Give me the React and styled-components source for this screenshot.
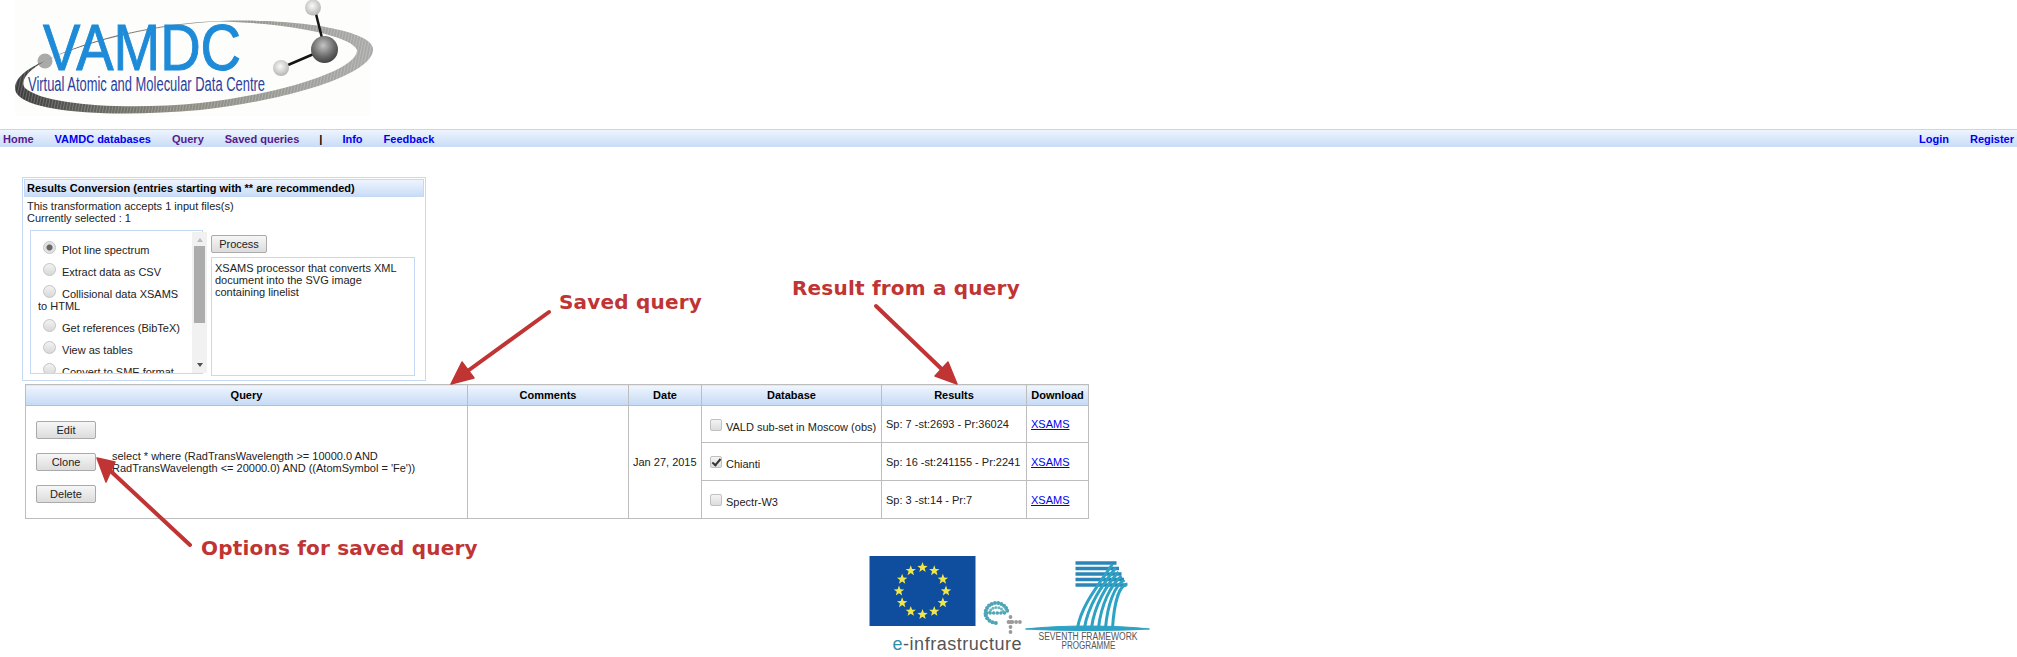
import React from 'react';
import styled, { createGlobalStyle } from 'styled-components';

const GlobalStyle = createGlobalStyle`
  html, body {
    margin: 0;
    padding: 0;
    background: #fff;
    font-family: "Liberation Sans", Arial, sans-serif;
    font-size: 11px;
    color: #222;
  }
`;

const Page = styled.div`
  position: relative;
  width: 2017px;
  height: 657px;
  overflow: hidden;
`;

const LogoBar = styled.header`
  height: 129px;
`;

const NavBar = styled.nav`
  display: flex;
  align-items: center;
  justify-content: space-between;
  height: 17px;
  padding: 0 3px;
  border-top: 1px solid #c3d7f2;
  background: linear-gradient(#eef4fe, #c9dcf7);
`;

const NavGroup = styled.div`
  display: flex;
  gap: 21px;
`;

const NavLink = styled.a`
  font-weight: bold;
  font-size: 11px;
  text-decoration: none;
  color: ${props => (props.$visited ? '#551a8b' : '#0000ee')};
`;

const NavSep = styled.span`
  font-weight: bold;
  color: #000;
  margin: 0 -1px 0 -1px;
`;

const Panel = styled.section`
  width: 400px;
  height: 200px;
  margin: 30px 0 0 22px;
  padding: 1px;
  border: 1px solid #c5d9f5;
`;

const PanelTitle = styled.div`
  height: 16px;
  line-height: 16px;
  padding-left: 2px;
  border: 1px solid #c5d9f5;
  background: linear-gradient(#eef4fe, #c9dcf7);
  font-weight: bold;
  color: #000;
`;

const PanelText = styled.p`
  margin: 3px 0 0 3px;
  line-height: 12px;
`;

const PanelBody = styled.div`
  display: flex;
  margin: 6px 0 0 6px;
`;

const OptionList = styled.div`
  width: 173px;
  height: 144px;
  padding: 10px 14px 0 7px;
  box-sizing: border-box;
  border: 1px solid #c5d9f5;
  overflow: hidden;
`;

const Option = styled.label`
  display: block;
  line-height: 12px;
  margin-bottom: 7px;
`;

const Radio = styled.input.attrs({ type: 'radio' })`
  appearance: none;
  display: inline-block;
  width: 13px;
  height: 13px;
  margin: 0 6px 0 5px;
  border: 1px solid #c4c4c4;
  border-radius: 50%;
  box-sizing: border-box;
  vertical-align: 0;
  background: ${props =>
    props.checked
      ? 'radial-gradient(circle, #666 0 2.5px, #ddd 3.5px, #eee 100%)'
      : 'linear-gradient(#f2f2f2, #d8d8d8)'};
`;

const Scrollbar = styled.div`
  display: flex;
  flex-direction: column;
  align-items: center;
  justify-content: space-between;
  position: relative;
  width: 15px;
  height: 141px;
  margin: 2px 0 0 -11px;
  padding: 6px 0;
  box-sizing: border-box;
  background: #f1f1f1;
`;

const ScrollThumb = styled.div`
  position: absolute;
  top: 14px;
  left: 2px;
  width: 11px;
  height: 77px;
  background: #acacac;
`;

const ScrollArrow = styled.span`
  width: 0;
  height: 0;
  border-left: 3.5px solid transparent;
  border-right: 3.5px solid transparent;
  ${props =>
    props.$up ? 'border-bottom: 4px solid #bbb;' : 'border-top: 4px solid #505050;'}
`;

const ProcessColumn = styled.div`
  display: flex;
  flex-direction: column;
  align-items: flex-start;
  margin: 5px 0 0 4px;
`;

const Description = styled.div`
  width: 195px;
  height: 109px;
  margin-top: 4px;
  padding: 4px 4px 4px 3px;
  border: 1px solid #c5d9f5;
  line-height: 12px;
`;

const Button = styled.button`
  display: block;
  width: ${props => props.$width || '60px'};
  height: 18px;
  padding: 0;
  border: 1px solid #aaa;
  border-radius: 2px;
  background: linear-gradient(#f6f6f6, #dcdcdc);
  font: 11px "Liberation Sans", Arial, sans-serif;
  color: #222;
`;

const QueryTable = styled.table`
  table-layout: fixed;
  width: 1063px;
  margin: 3px 0 0 25px;
  border-collapse: collapse;
`;

const HeadCell = styled.th`
  height: 20px;
  padding: 0;
  border: 1px solid #bdbdbd;
  background: linear-gradient(#f0f6fe, #c5d9f5);
  font-size: 11px;
  font-weight: bold;
  color: #000;
`;

const Cell = styled.td`
  padding: 0 0 0 ${props => props.$pad || '4px'};
  border: 1px solid #bdbdbd;
  font-size: 11px;
  line-height: 12px;
`;

const QueryRow = styled.div`
  display: flex;
  align-items: center;
  gap: 16px;
  padding-left: 10px;
`;

const ButtonStack = styled.div`
  display: flex;
  flex-direction: column;
  gap: 14px;
`;

const QueryText = styled.div`
  width: 320px;
`;

const DbLabel = styled.label`
  display: block;
  padding-top: 3px;
`;

const Check = styled.input.attrs({ type: 'checkbox' })`
  appearance: none;
  position: relative;
  display: inline-block;
  width: 12px;
  height: 12px;
  margin: 0 4px 0 0;
  border: 1px solid #c0c0c0;
  border-radius: 2px;
  box-sizing: border-box;
  vertical-align: 0;
  background: linear-gradient(#f4f4f4, #dcdcdc);

  &:checked::after {
    content: '';
    position: absolute;
    left: 3px;
    top: 0;
    width: 3px;
    height: 7px;
    border: solid #333;
    border-width: 0 2px 2px 0;
    transform: rotate(40deg);
  }
`;

const ResultLink = styled.a`
  color: #0000ee;
  text-decoration: underline;
`;

const Footer = styled.footer`
  display: flex;
  justify-content: center;
  margin-top: 26px;
`;

const ArrowLayer = styled.svg`
  position: absolute;
  top: 0;
  left: 0;
  pointer-events: none;
`;

const Callout = styled.div`
  position: absolute;
  left: ${props => props.$x}px;
  top: ${props => props.$y}px;
  font: bold 20px "DejaVu Sans", sans-serif;
  line-height: 24px;
  letter-spacing: 0.2px;
  white-space: nowrap;
  color: #c03434;
`;

// crescent round the logo: thin at the top, thick right and bottom-left
const RING_PATH =
  'M45 61C22 70 10 84 17 94C30 112 110 118 200 110C290 100 376 74 373 48C371 31 300 18 220 21C160 23 90 38 45 61ZM45 61C30 69 19 80 25 88C45 106 130 110 200 103C280 94 358 70 357 50C352 36 290 23 220 21.6C160 24 90 40 45 61Z';

const Logo = () => (
  <svg width="380" height="129" viewBox="0 0 380 129">
    <defs>
      <linearGradient id="ring" x1="0" x2="1" y1="0" y2="0">
        <stop offset="0" stopColor="#3c3c3c" />
        <stop offset="0.45" stopColor="#8a8a80" />
        <stop offset="1" stopColor="#aaa" />
      </linearGradient>
      <radialGradient id="bigBall" cx="0.45" cy="0.35" r="0.7">
        <stop offset="0" stopColor="#c4c4c4" />
        <stop offset="0.6" stopColor="#6a6a6a" />
        <stop offset="1" stopColor="#3a3a3a" />
      </radialGradient>
      <radialGradient id="smallBall" cx="0.45" cy="0.4" r="0.65">
        <stop offset="0" stopColor="#fafafa" />
        <stop offset="1" stopColor="#b0b0ac" />
      </radialGradient>
      <pattern id="hatch" width="3" height="3" patternUnits="userSpaceOnUse" patternTransform="rotate(12)">
        <rect width="1" height="3" fill="#ffffff" fillOpacity="0.22" />
      </pattern>
    </defs>
    <rect x="15" y="0" width="355" height="116" fill="#fdfdfc" />
    <circle cx="45" cy="61" r="7.5" fill="#aaa" />
    <path d={RING_PATH} fill="url(#ring)" fillRule="evenodd" />
    <path d={RING_PATH} fill="url(#hatch)" fillRule="evenodd" />
    <text
      x="43"
      y="70"
      fontFamily="Liberation Sans"
      fontSize="64"
      textLength="198"
      lengthAdjust="spacingAndGlyphs"
      fill="#1e8bd8"
      stroke="#1e8bd8"
      strokeWidth="1"
    >
      VAMDC
    </text>
    <text
      x="28"
      y="91"
      fontFamily="Liberation Sans"
      fontSize="20"
      textLength="237"
      lengthAdjust="spacingAndGlyphs"
      fill="#2a3f9f"
    >
      Virtual Atomic and Molecular Data Centre
    </text>
    <path d="M316 14L322 38M288 65L316 53" stroke="#151515" strokeWidth="2.5" />
    <circle cx="324.5" cy="49.5" r="13.5" fill="url(#bigBall)" />
    <circle cx="313" cy="7.5" r="8" fill="url(#smallBall)" />
    <circle cx="281" cy="68" r="8" fill="url(#smallBall)" />
  </svg>
);

const STAR = 'M0-5.4L1.4-1.7 5.2-1.6 2.2.7 3.2 4.5 0 2.3 -3.2 4.5 -2.2.7 -5.2-1.6 -1.4-1.7Z';
const starAngles = Array.from({ length: 12 }, (_, i) => (i * Math.PI) / 6);
const arcDots = Array.from({ length: 11 }, (_, i) => Math.PI * (0.98 + i * 0.095));
const innerDots = Array.from({ length: 7 }, (_, i) => Math.PI * (1.05 + i * 0.14));
const lowDots = Array.from({ length: 5 }, (_, i) => Math.PI * (0.92 - i * 0.1));
const barDots = [0, 1, 2, 3, 4, 5];
const plusDots = [0, 1, 2, 3];

const FooterLogos = () => (
  <svg width="320" height="112" viewBox="848.5 545 320 112">
    <rect x="869" y="556" width="106" height="70" fill="#0f4d9f" />
    {starAngles.map(a => (
      <path
        key={a}
        d={STAR}
        fill="#efe64c"
        transform={`translate(${922 + 23.5 * Math.cos(a)} ${591 + 23.5 * Math.sin(a)})`}
      />
    ))}
    {arcDots.map(a => (
      <circle key={a} cx={996 + 11 * Math.cos(a)} cy={613 + 10 * Math.sin(a)} r="2" fill="#4ea5b5" />
    ))}
    {innerDots.map(a => (
      <circle key={a} cx={996 + 7 * Math.cos(a)} cy={613 + 5.5 * Math.sin(a)} r="1.5" fill="#6db5c2" />
    ))}
    {lowDots.map(a => (
      <circle key={a} cx={996 + 11 * Math.cos(a)} cy={613 + 10 * Math.sin(a)} r="2" fill="#4ea5b5" />
    ))}
    {barDots.map(i => (
      <circle key={i} cx={986 + i * 3.6} cy="613" r="1.8" fill="#4ea5b5" />
    ))}
    {plusDots.map(i => (
      <circle key={i} cx={1008 + i * 3.8} cy="622" r="1.9" fill="#9a9a9a" />
    ))}
    {plusDots.map(i => (
      <circle key={i} cx="1010" cy={617 + i * 5} r="1.9" fill="#9a9a9a" />
    ))}
    <text x="892" y="650" fontFamily="Liberation Sans" fontSize="18" textLength="129" fill="#555">
      <tspan fill="#2f8fb0">e</tspan>-infrastructure
    </text>
    {[0, 1, 2, 3, 4].map(i => (
      <path
        key={i}
        d={`M1075 ${563 + i * 5.5}H${1116 + i * 2.5}`}
        stroke="#2b86b8"
        strokeWidth="3.4"
      />
    ))}
    {[0, 1, 2, 3, 4, 5].map(i => (
      <path
        key={i}
        d={`M${1112 + i * 3} ${564 + i * 4}C${1098 + i * 4} 585 ${1081 + i * 6.5} 605 ${1077 + i * 7} 628`}
        stroke="#2ea2c4"
        strokeWidth="3"
        fill="none"
      />
    ))}
    <path d="M1025 629C1060 625 1115 625 1149 629C1115 631 1060 631 1025 629Z" fill="#2ea2c4" stroke="#2ea2c4" />
    <text
      x="1038"
      y="640"
      fontFamily="Liberation Sans"
      fontSize="10"
      textLength="99"
      lengthAdjust="spacingAndGlyphs"
      fill="#555"
    >
      SEVENTH FRAMEWORK
    </text>
    <text
      x="1061"
      y="649"
      fontFamily="Liberation Sans"
      fontSize="10"
      textLength="54"
      lengthAdjust="spacingAndGlyphs"
      fill="#555"
    >
      PROGRAMME
    </text>
  </svg>
);

const Arrow = ({ line, head }) => (
  <g>
    <path d={line} stroke="#c03434" strokeWidth="4" strokeLinecap="round" fill="none" />
    <polygon points={head} fill="#c03434" stroke="#c03434" strokeWidth="1.5" strokeLinejoin="round" />
  </g>
);

const options = [
  { label: 'Plot line spectrum', checked: true },
  { label: 'Extract data as CSV' },
  { label: 'Collisional data XSAMS to HTML' },
  { label: 'Get references (BibTeX)' },
  { label: 'View as tables' },
  { label: 'Convert to SME format' },
];

const databases = [
  { name: 'VALD sub-set in Moscow (obs)', result: 'Sp: 7 -st:2693 - Pr:36024', height: 37 },
  { name: 'Chianti', result: 'Sp: 16 -st:241155 - Pr:2241', checked: true, height: 38 },
  { name: 'Spectr-W3', result: 'Sp: 3 -st:14 - Pr:7', height: 38 },
];

const columns = [442, 161, 73, 180, 145, 62];
const headers = ['Query', 'Comments', 'Date', 'Database', 'Results', 'Download'];

const App = () => (
  <Page>
    <GlobalStyle />
    <LogoBar>
      <Logo />
    </LogoBar>
    <NavBar>
      <NavGroup>
        <NavLink $visited href="#">Home</NavLink>
        <NavLink href="#">VAMDC databases</NavLink>
        <NavLink $visited href="#">Query</NavLink>
        <NavLink $visited href="#">Saved queries</NavLink>
        <NavSep>|</NavSep>
        <NavLink href="#">Info</NavLink>
        <NavLink href="#">Feedback</NavLink>
      </NavGroup>
      <NavGroup>
        <NavLink href="#">Login</NavLink>
        <NavLink href="#">Register</NavLink>
      </NavGroup>
    </NavBar>

    <Panel>
      <PanelTitle>Results Conversion (entries starting with ** are recommended)</PanelTitle>
      <PanelText>
        This transformation accepts 1 input files(s)
        <br />
        Currently selected : 1
      </PanelText>
      <PanelBody>
        <OptionList>
          {options.map(o => (
            <Option key={o.label}>
              <Radio name="conversion" checked={!!o.checked} readOnly />
              {o.label}
            </Option>
          ))}
        </OptionList>
        <Scrollbar>
          <ScrollArrow $up />
          <ScrollThumb />
          <ScrollArrow />
        </Scrollbar>
        <ProcessColumn>
          <Button $width="56px">Process</Button>
          <Description>
            XSAMS processor that converts XML document into the SVG image containing linelist
          </Description>
        </ProcessColumn>
      </PanelBody>
    </Panel>

    <QueryTable>
      <colgroup>
        {columns.map((w, i) => (
          <col key={i} style={{ width: w }} />
        ))}
      </colgroup>
      <thead>
        <tr>
          {headers.map(h => (
            <HeadCell key={h}>{h}</HeadCell>
          ))}
        </tr>
      </thead>
      <tbody>
        {databases.map((db, i) => (
          <tr key={db.name} style={{ height: db.height }}>
            {i === 0 && (
              <>
                <Cell rowSpan={3} $pad="0">
                  <QueryRow>
                    <ButtonStack>
                      <Button>Edit</Button>
                      <Button>Clone</Button>
                      <Button>Delete</Button>
                    </ButtonStack>
                    <QueryText>
                      select * where (RadTransWavelength &gt;= 10000.0 AND RadTransWavelength &lt;= 20000.0) AND ((AtomSymbol = 'Fe'))
                    </QueryText>
                  </QueryRow>
                </Cell>
                <Cell rowSpan={3} />
                <Cell rowSpan={3}>Jan 27, 2015</Cell>
              </>
            )}
            <Cell $pad="8px">
              <DbLabel>
                <Check defaultChecked={db.checked} />
                {db.name}
              </DbLabel>
            </Cell>
            <Cell>{db.result}</Cell>
            <Cell>
              <ResultLink href="#">XSAMS</ResultLink>
            </Cell>
          </tr>
        ))}
      </tbody>
    </QueryTable>

    <Footer>
      <FooterLogos />
    </Footer>

    <ArrowLayer width="2017" height="657">
      <Arrow line="M549 312L458 378" head="451,384 462,362 474,378" />
      <Arrow line="M876 306L951 378" head="957,384 948,362 935,376" />
      <Arrow line="M190 545L102 463" head="97,458 106,482 115,462" />
    </ArrowLayer>
    <Callout $x={559} $y={290}>Saved query</Callout>
    <Callout $x={792} $y={276}>Result from a query</Callout>
    <Callout $x={201} $y={536}>Options for saved query</Callout>
  </Page>
);

export default App;
